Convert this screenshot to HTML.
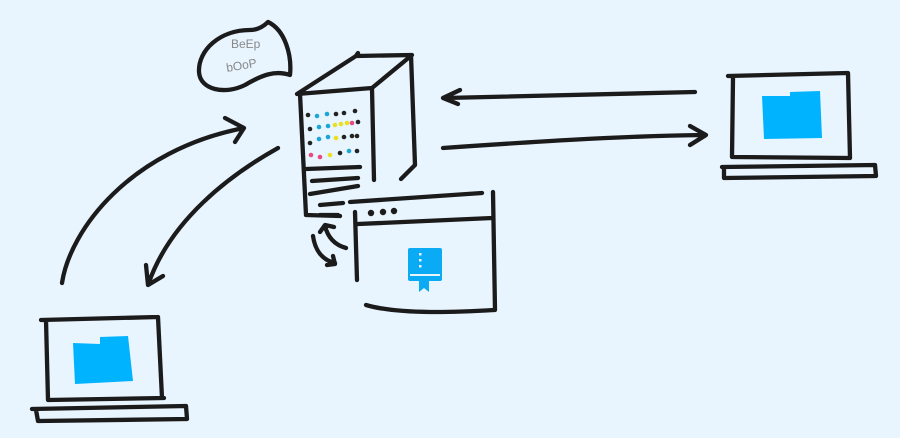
<!DOCTYPE html>
<html><head><style>html,body{margin:0;padding:0;background:#e8f4fe;}svg{display:block}</style></head><body>
<svg width="900" height="438" viewBox="0 0 900 438" xmlns="http://www.w3.org/2000/svg">
<rect width="900" height="438" fill="#e8f4fe"/>
<g fill="none" stroke="#1b1b1b" stroke-width="4.3" stroke-linecap="round" stroke-linejoin="round">
<path d="M268,22 C285,30 292,55 290,75 C275,70 262,75 245,85 C225,95 200,90 199,72 C198,50 220,30 250,30 C258,30 264,26 268,22"/>
<path d="M297,94 L372,88 M300,94 L306,215 L340,216 M297,94 L356,56 L412,55 L372,88 M356,56 L358,53 M372,88 L374,180 M411,55 L415,165 L401,179"/>
<path d="M306,169 L360,167 M312,181 L358,178 M310,194 L358,186 M320,205 L343,203 M320,215 L338,215"/>
<path d="M350,202 L482,193 M493,192 L495,310 M355,212 L357,280 M358,224 L492,218 M366,305 C400,315 460,312 494,310"/>
<path d="M346,248 C335,245 328,238 325,226 M320,232 L325,225 L334,227 M313,236 C315,250 322,260 335,263 M327,265 L335,264 L333,256"/>
<path d="M695,92 L445,98 M460,90 L443,98 L458,104 M443,148 C530,142 620,136 705,135 M690,126 L706,135 L690,145"/>
<path d="M62,283 C70,230 130,150 244,128 M225,118 L244,128 L235,142 M278,148 C230,175 170,220 148,285 M146,265 L148,285 L163,276"/>
<path d="M728,76 L848,73 M733,78 L732,157 L850,158 M848,73 L850,158 M722,167 L875,165 L876,176 L724,178 L724,168"/>
<path d="M41,320 L158,317 M46,320 L48,400 L164,398 M158,317 L162,398 M32,409 L186,406 L187,419 L38,421 L36,410"/>
</g>
<path d="M762,96 L790,96 L790,92 L820,91 L822,138 L764,139 Z" fill="#00b3ff"/>
<path d="M73,343 L100,344 L100,337 L128,336 L133,381 L75,384 Z" fill="#00b3ff"/>
<g fill="#1b1b1b"><circle cx="371" cy="213" r="3.2"/><circle cx="383" cy="212" r="3.2"/><circle cx="394" cy="211" r="3.2"/></g>
<rect x="408" y="248" width="34" height="33" rx="2" fill="#0aaaf5"/>
<path d="M411,251 L439,251 L439,273 L411,273 Z" fill="none" stroke="#e8f4fe" stroke-width="0"/>
<path d="M410,275 L440,275" stroke="#e8f4fe" stroke-width="2"/>
<path d="M419,279 L419,292 L424,288 L429,292 L429,279 Z" fill="#0aaaf5"/>
<g fill="#e8f4fe"><rect x="419" y="253" width="2.5" height="2.5"/><rect x="419" y="259" width="2.5" height="2.5"/><rect x="419" y="265" width="2.5" height="2.5"/></g>
<g>
<circle cx="308" cy="115" r="2.3" fill="#222"/><circle cx="317" cy="116" r="2.3" fill="#1aa7d8"/><circle cx="327" cy="114" r="2.3" fill="#1aa7d8"/><circle cx="336" cy="114" r="2.3" fill="#222"/><circle cx="344" cy="113" r="2.3" fill="#222"/><circle cx="355" cy="111" r="2.3" fill="#222"/>
<circle cx="310" cy="129" r="2.3" fill="#222"/><circle cx="319" cy="127" r="2.3" fill="#1aa7d8"/><circle cx="328" cy="126" r="2.3" fill="#1aa7d8"/><circle cx="335" cy="125" r="2.3" fill="#e8e020"/><circle cx="341" cy="124" r="2.3" fill="#e8e020"/><circle cx="347" cy="123" r="2.3" fill="#e8e020"/><circle cx="352" cy="123" r="2.3" fill="#e84a80"/><circle cx="358" cy="122" r="2.3" fill="#222"/>
<circle cx="310" cy="143" r="2.3" fill="#222"/><circle cx="319" cy="139" r="2.3" fill="#1aa7d8"/><circle cx="328" cy="137" r="2.3" fill="#1aa7d8"/><circle cx="336" cy="138" r="2.3" fill="#e8e020"/><circle cx="344" cy="137" r="2.3" fill="#222"/><circle cx="352" cy="136" r="2.3" fill="#222"/><circle cx="357" cy="136" r="2.3" fill="#222"/>
<circle cx="311" cy="155" r="2.3" fill="#e84a80"/><circle cx="320" cy="157" r="2.3" fill="#e84a80"/><circle cx="330" cy="155" r="2.3" fill="#e8e020"/><circle cx="340" cy="153" r="2.3" fill="#222"/><circle cx="349" cy="151" r="2.3" fill="#1aa7d8"/><circle cx="357" cy="151" r="2.3" fill="#222"/>
</g>
<text x="231" y="48" font-family="Liberation Sans, sans-serif" font-size="12" fill="#888">BeEp</text>
<text x="227" y="72" font-family="Liberation Sans, sans-serif" font-size="12" fill="#888" transform="rotate(-10 227 72)">bOoP</text>
</svg>
</body></html>
